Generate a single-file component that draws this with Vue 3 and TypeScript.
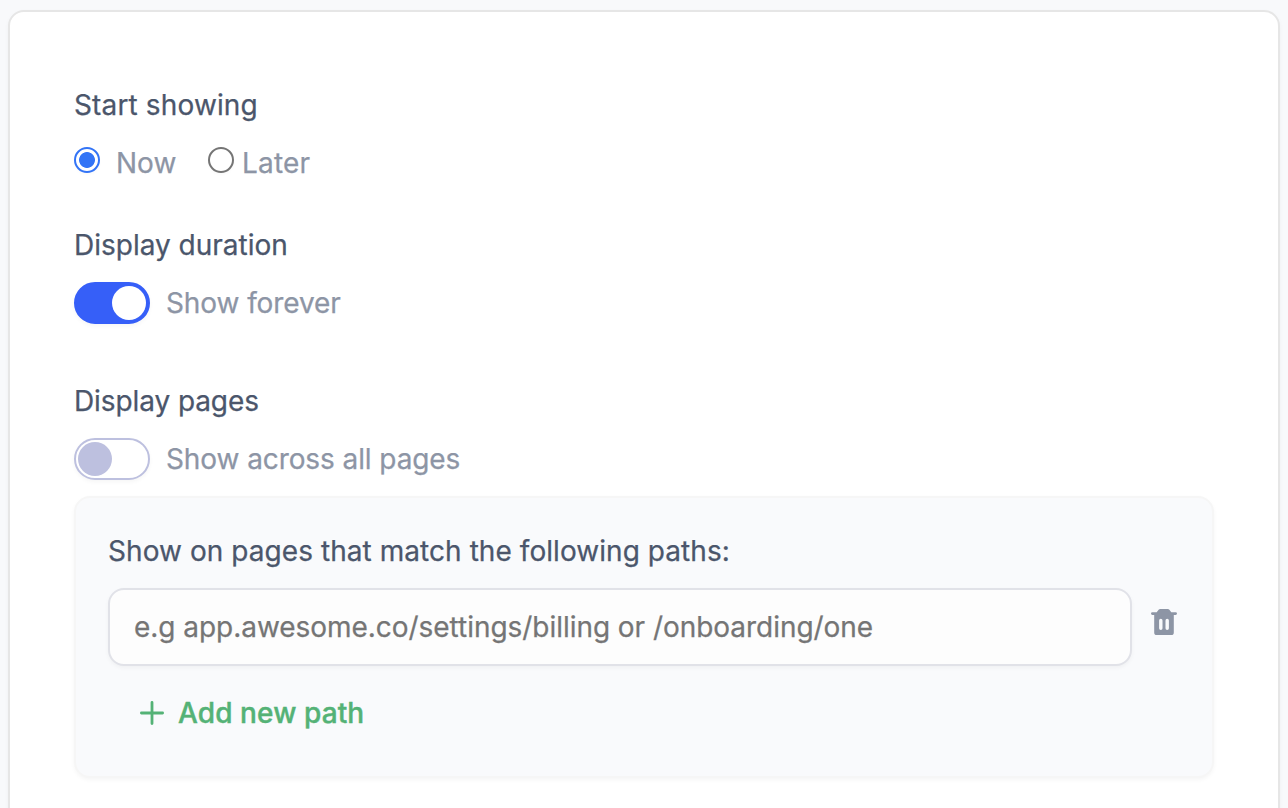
<script setup lang="ts">
import { ref } from 'vue'

const start = ref<'now' | 'later'>('now')
const forever = ref(true)
const allPages = ref(false)
const path = ref('')
</script>

<template>
  <main class="page">
    <section class="card">
      <h2 class="heading"><span class="t-start">Start showing</span></h2>
      <div class="radios">
        <label class="radio now">
          <input v-model="start" type="radio" value="now" />
          <span>Now</span>
        </label>
        <label class="radio later">
          <input v-model="start" type="radio" value="later" />
          <span class="t-later">Later</span>
        </label>
      </div>

      <h2 class="heading">Display duration</h2>
      <div class="switch-row duration">
        <button class="switch" :class="{ on: forever }" role="switch" :aria-checked="forever" @click="forever = !forever">
          <span class="knob"></span>
        </button>
        <span class="t-tight">Show forever</span>
      </div>

      <h2 class="heading"><span class="t-tight">Display pages</span></h2>
      <div class="switch-row">
        <button class="switch" :class="{ on: allPages }" role="switch" :aria-checked="allPages" @click="allPages = !allPages">
          <span class="knob"></span>
        </button>
        <span class="t-tight">Show across all pages</span>
      </div>

      <div class="panel">
        <h3 class="heading"><span class="t-match">Show on pages that match the following paths:</span></h3>
        <div class="path-row">
          <input v-model="path" class="path" type="text" placeholder="e.g app.awesome.co/settings/billing or /onboarding/one" />
          <button class="trash" aria-label="Delete path">
            <svg width="26" height="26" viewBox="0 0 26 26">
              <path
                fill="currentColor"
                fill-rule="evenodd"
                d="M9.2 0h7.6q1 0 1.6.7L20.3 3.2H24.6a1.4 1.4 0 0 1 0 2.8H22.8V23.4Q22.8 26 20.2 26H5.8Q3.2 26 3.2 23.4V6H1.4a1.4 1.4 0 0 1 0-2.8H5.7L7.6.7Q8.2 0 9.2 0ZM9.8 9.7Q8.1 9.7 8.1 11.4V19.3Q8.1 21 9.8 21T11.5 19.3V11.4Q11.5 9.7 9.8 9.7ZM16.2 9.7Q14.5 9.7 14.5 11.4V19.3Q14.5 21 16.2 21T17.9 19.3V11.4Q17.9 9.7 16.2 9.7Z"
              />
            </svg>
          </button>
        </div>
        <button class="add">
          <svg width="24" height="24" viewBox="0 0 24 24">
            <path d="M12 1.4V22.6M1.4 12H22.6" stroke="currentColor" stroke-width="2.8" stroke-linecap="round" />
          </svg>
          <span class="t-add">Add new path</span>
        </button>
      </div>
    </section>
  </main>
</template>

<style>
body {
  margin: 0;
  background: #f8f9fb;
}
</style>

<style scoped>
* {
  box-sizing: border-box;
}
.page {
  height: 808px;
  padding: 10px 8px 0;
  overflow: hidden;
  font: 400 28px/40px Inter, sans-serif;
  color: #8d95a5;
  white-space: nowrap;
  -webkit-text-stroke-width: 0.25px;
}
.card {
  height: 830px;
  padding: 73px 64px 0;
  background: #fff;
  border: 2px solid #e6e6e6;
  border-radius: 16px;
  box-shadow: 0 2px 4px rgba(0, 0, 0, 0.04);
}
.heading {
  margin: 0;
  font-size: 28px;
  font-weight: 400;
  line-height: 40px;
  color: #4b566b;
}
.t-start {
  letter-spacing: 0.14px;
}
.t-later {
  letter-spacing: 0.2px;
}
.t-tight {
  letter-spacing: -0.09px;
}
.t-match {
  letter-spacing: 0.06px;
}
.t-add {
  letter-spacing: 0.1px;
}
button {
  padding: 0;
  border: 0;
  background: none;
  color: inherit;
  font: inherit;
  cursor: pointer;
}
.radios {
  display: flex;
  gap: 32px;
  height: 40px;
  margin: 18px 0 42px;
}
.radio {
  display: flex;
  gap: 16px;
}
.radio.now {
  width: 102px;
}
.radio.later {
  gap: 8px;
}
.radio input {
  appearance: none;
  flex: none;
  width: 26px;
  height: 26px;
  margin: 4px 0 0;
  border: 2px solid #757575;
  border-radius: 50%;
  box-shadow: 0 2px 3px rgba(0, 0, 0, 0.02);
}
.radio input:checked {
  border-color: #3374f6;
  background: radial-gradient(circle, #3374f6 7.5px, #fff 8.3px);
}
.switch-row {
  display: flex;
  align-items: center;
  gap: 16px;
  height: 42px;
  margin-top: 17px;
}
.duration {
  margin-bottom: 57px;
}
.switch {
  display: flex;
  width: 76px;
  height: 42px;
  padding: 2px;
  border: 2px solid #bdc0df;
  border-radius: 21px;
  background: #fff;
  box-shadow: 0 2px 4px rgba(0, 0, 0, 0.04);
}
.knob {
  width: 34px;
  height: 34px;
  border-radius: 50%;
  background: #bdc0df;
}
.switch.on {
  justify-content: flex-end;
  background: #365ff8;
  border-color: #365ff8;
}
.switch.on .knob {
  background: #fff;
}
.panel {
  height: 282px;
  margin-top: 16px;
  padding: 33px 32px 0;
  background: #f9fafc;
  border: 2px solid #f6f6f6;
  border-radius: 16px;
  box-shadow: 0 2px 4px rgba(0, 0, 0, 0.04);
}
.path-row {
  display: flex;
  gap: 19px;
  margin-top: 17px;
}
.path {
  width: 1024px;
  height: 78px;
  padding: 0 24px;
  border: 2px solid #e1e2e8;
  border-radius: 16px;
  outline: none;
  background: #fdfdfd;
  box-shadow: 0 2px 4px rgba(0, 0, 0, 0.04);
  color: #4b566b;
  font: inherit;
  letter-spacing: -0.04px;
}
.path::placeholder {
  color: #757575;
  opacity: 1;
}
.trash {
  width: 26px;
  height: 26px;
  margin-top: 21px;
  color: #8d95a5;
}
.trash svg {
  display: block;
}
.add {
  display: flex;
  align-items: center;
  gap: 14px;
  height: 40px;
  margin: 27px 0 0 32px;
  color: #54b276;
  font-weight: 500;
  -webkit-text-stroke-width: 0.4px;
}
</style>
